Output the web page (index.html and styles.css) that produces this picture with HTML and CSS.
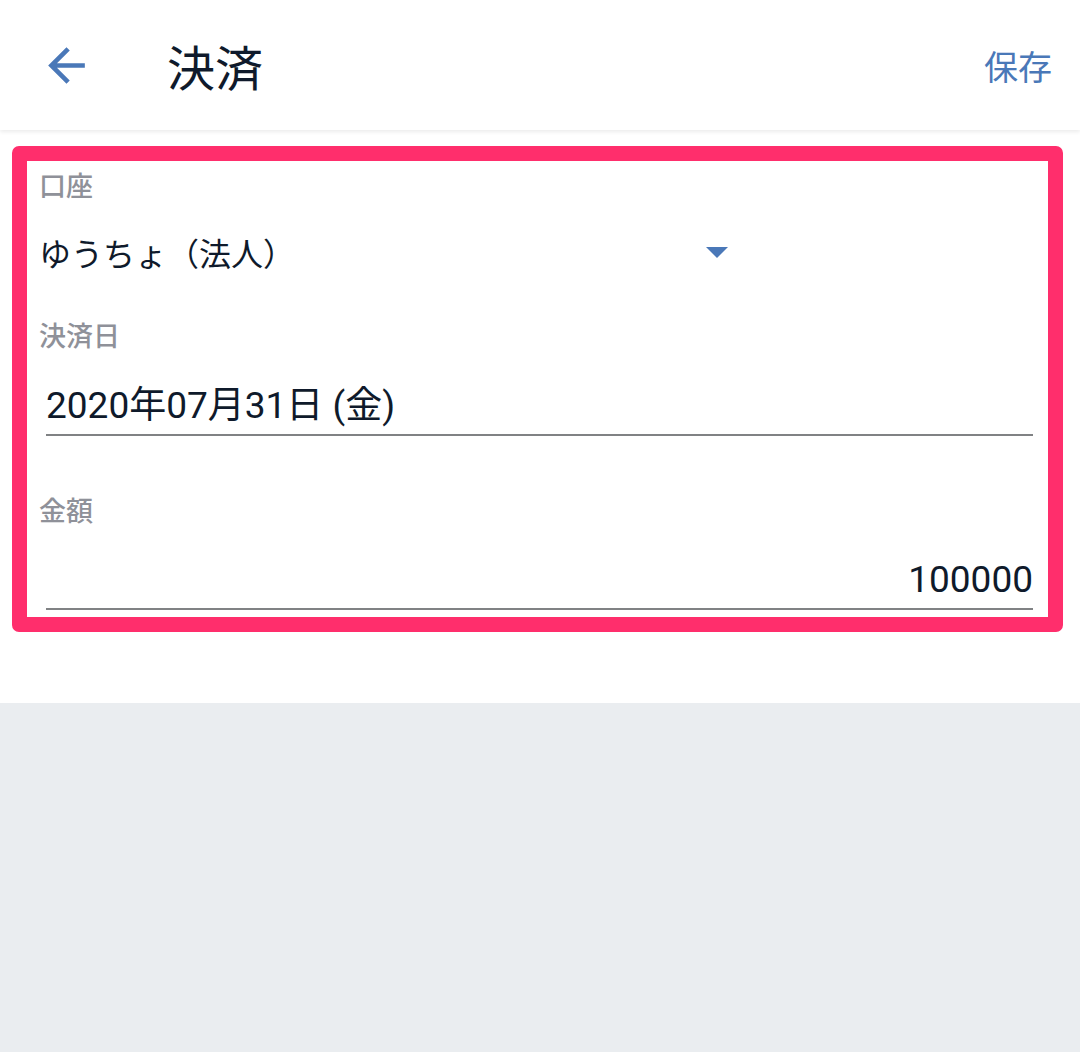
FILE: index.html
```html
<!DOCTYPE html>
<html lang="ja">
<head>
<meta charset="utf-8">
<link rel="stylesheet" href="styles.css">
</head>
<body>
<header class="appbar">
  <svg class="back" viewBox="0 0 24 24" width="55" height="55"><path d="M20 11H7.83l5.59-5.59L12 4l-8 8 8 8 1.41-1.41L7.83 13H20v-2z" fill="#4a78b8"/></svg>
  <h1 class="title">決済</h1>
  <span class="save">保存</span>
</header>
<main class="content">
  <section class="form-box">
    <div class="label label-first">口座</div>
    <div class="select-row">
      <span class="select-value">ゆうちょ（法人）</span>
      <span class="caret"></span>
    </div>
    <div class="label label-date">決済日</div>
    <div class="field field-date">2020年07月31日 (金)</div>
    <div class="label label-amount">金額</div>
    <div class="field field-amount">100000</div>
  </section>
</main>
<div class="filler"></div>
</body>
</html>
```
FILE: styles.css
```css
html, body {
  margin: 0;
  padding: 0;
  background: #eaedf0;
  font-family: Roboto, "Noto Sans CJK JP", sans-serif;
  color: #0f1a2b;
}
.appbar {
  height: 130px;
  background: #fff;
  display: flex;
  align-items: center;
  box-shadow: 0 2px 4px rgba(0,0,0,0.08);
  position: relative;
  z-index: 1;
}
.back {
  margin-left: 39px;
  flex: none;
}
.title {
  margin: 0 0 0 73px;
  font-size: 48px;
  font-weight: 400;
  flex: 1;
}
.save {
  color: #4a78b8;
  font-size: 34px;
  margin-right: 28px;
}
.content {
  background: #fff;
  padding: 16px 17px 71px 12px;
}
.form-box {
  border: 15px solid #ff2e6c;
  border-radius: 7px;
  padding: 8px 15px 7px 12px;
}
.label {
  font-size: 27px;
  font-weight: 500;
  line-height: 36px;
  color: #8f9199;
}
.select-row {
  margin-top: 15px;
  height: 64px;
  width: 700px;
  display: flex;
  align-items: center;
  justify-content: space-between;
}
.select-value {
  font-size: 32px;
}
.caret {
  width: 0;
  height: 0;
  border-left: 11px solid transparent;
  border-right: 11px solid transparent;
  border-top: 11px solid #4a78b8;
  margin-right: 11px;
}
.label-date { margin-top: 35px; }
.field {
  margin-left: 7px;
  font-size: 37px;
  line-height: 48px;
  padding-bottom: 4px;
  border-bottom: 2px solid #808284;
}
.field-date { margin-top: 27px; }
.label-amount { margin-top: 58px; }
.field-amount {
  margin-top: 26px;
  text-align: right;
}
.filler {
  height: 349px;
}
```
